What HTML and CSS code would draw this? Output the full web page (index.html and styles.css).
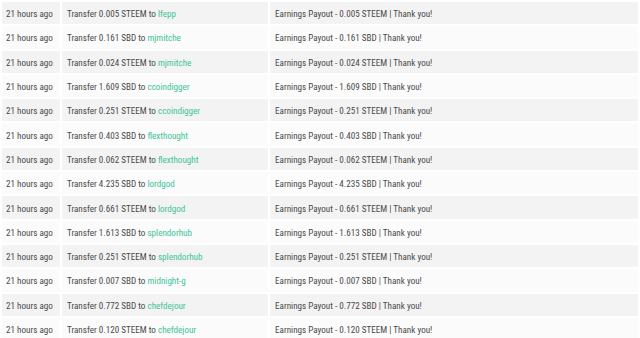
FILE: index.html
```html
<!DOCTYPE html>
<html>
<head>
<meta charset="utf-8">
<link rel="stylesheet" href="styles.css">
</head>
<body>
<table class="history">
<tbody>
<tr><td class="time">21 hours ago</td><td class="op">Transfer 0.005 STEEM to <a class="user" href="#">lfepp</a></td><td class="memo">Earnings Payout - 0.005 STEEM | Thank you!</td></tr>
<tr><td class="time">21 hours ago</td><td class="op">Transfer 0.161 SBD to <a class="user" href="#">mjmitche</a></td><td class="memo">Earnings Payout - 0.161 SBD | Thank you!</td></tr>
<tr><td class="time">21 hours ago</td><td class="op">Transfer 0.024 STEEM to <a class="user" href="#">mjmitche</a></td><td class="memo">Earnings Payout - 0.024 STEEM | Thank you!</td></tr>
<tr><td class="time">21 hours ago</td><td class="op">Transfer 1.609 SBD to <a class="user" href="#">ccoindigger</a></td><td class="memo">Earnings Payout - 1.609 SBD | Thank you!</td></tr>
<tr><td class="time">21 hours ago</td><td class="op">Transfer 0.251 STEEM to <a class="user" href="#">ccoindigger</a></td><td class="memo">Earnings Payout - 0.251 STEEM | Thank you!</td></tr>
<tr><td class="time">21 hours ago</td><td class="op">Transfer 0.403 SBD to <a class="user" href="#">flexthought</a></td><td class="memo">Earnings Payout - 0.403 SBD | Thank you!</td></tr>
<tr><td class="time">21 hours ago</td><td class="op">Transfer 0.062 STEEM to <a class="user" href="#">flexthought</a></td><td class="memo">Earnings Payout - 0.062 STEEM | Thank you!</td></tr>
<tr><td class="time">21 hours ago</td><td class="op">Transfer 4.235 SBD to <a class="user" href="#">lordgod</a></td><td class="memo">Earnings Payout - 4.235 SBD | Thank you!</td></tr>
<tr><td class="time">21 hours ago</td><td class="op">Transfer 0.661 STEEM to <a class="user" href="#">lordgod</a></td><td class="memo">Earnings Payout - 0.661 STEEM | Thank you!</td></tr>
<tr><td class="time">21 hours ago</td><td class="op">Transfer 1.613 SBD to <a class="user" href="#">splendorhub</a></td><td class="memo">Earnings Payout - 1.613 SBD | Thank you!</td></tr>
<tr><td class="time">21 hours ago</td><td class="op">Transfer 0.251 STEEM to <a class="user" href="#">splendorhub</a></td><td class="memo">Earnings Payout - 0.251 STEEM | Thank you!</td></tr>
<tr><td class="time">21 hours ago</td><td class="op">Transfer 0.007 SBD to <a class="user" href="#">midnight-g</a></td><td class="memo">Earnings Payout - 0.007 SBD | Thank you!</td></tr>
<tr><td class="time">21 hours ago</td><td class="op">Transfer 0.772 SBD to <a class="user" href="#">chefdejour</a></td><td class="memo">Earnings Payout - 0.772 SBD | Thank you!</td></tr>
<tr><td class="time">21 hours ago</td><td class="op">Transfer 0.120 STEEM to <a class="user" href="#">chefdejour</a></td><td class="memo">Earnings Payout - 0.120 STEEM | Thank you!</td></tr>
</tbody>
</table>
</body>
</html>
```
FILE: styles.css
```css
html, body {
  margin: 0;
  padding: 0;
  background: #ffffff;
  overflow: hidden;
}

.history {
  width: 640px;
  border-collapse: separate;
  border-spacing: 2px;
  table-layout: fixed;
  font-family: "Roboto", "Liberation Sans", sans-serif;
  font-stretch: condensed;
  font-size: 9.1px;
  color: #4a4a4a;
}

.history td {
  height: 22.3px;
  padding: 2px 5px 0;
  white-space: nowrap;
  vertical-align: middle;
  background: #fbfbfb;
  box-sizing: border-box;
}

.history tr:nth-child(odd) td {
  background: #f3f3f3;
}

.history td.time {
  width: 58px;
  padding-left: 4px;
}

.history td.op {
  width: 206px;
}

.user {
  color: #3cc497;
  text-decoration: none;
}
```
